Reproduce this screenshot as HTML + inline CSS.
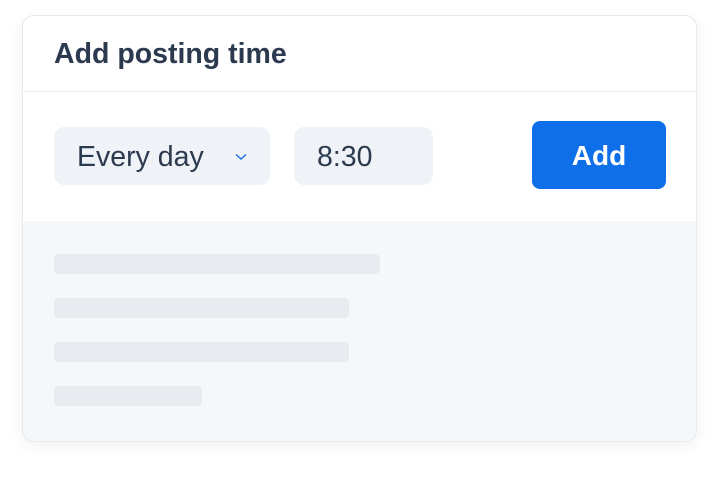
<!DOCTYPE html><html><head><style>
body{margin:0;width:720px;height:480px;background:#fff;font-family:"Liberation Sans",sans-serif;position:relative;overflow:hidden}
.card{position:absolute;left:22px;top:15px;width:673px;height:425px;border:1px solid #e6e8eb;border-radius:12px;overflow:hidden;box-shadow:0 4px 16px rgba(0,0,0,.06);background:#fff}
.h{position:absolute;left:31px;top:22px;font-size:28.5px;font-weight:bold;color:#2c3a4f}
.line{position:absolute;left:0;right:0;top:75px;height:1px;background:#e8edf3}
.sel{position:absolute;left:31px;top:111px;width:216px;height:58px;background:#eff2f7;border-radius:10px}
.sel span{position:absolute;left:23px;top:14px;font-size:28.5px;color:#2c3a4f}
.tm{position:absolute;left:271px;top:111px;width:139px;height:58px;background:#eff2f7;border-radius:10px}
.tm span{position:absolute;left:23px;top:14px;font-size:28.5px;color:#2c3a4f}
.btn{position:absolute;left:509px;top:105px;width:134px;height:68px;background:#0f6fe8;border-radius:8px;color:#fff;font-weight:bold;font-size:28px;text-align:center;line-height:70px}
.bot{position:absolute;left:0;right:0;top:205px;bottom:0;background:#f5f8fb}
.b{position:absolute;left:31px;height:20px;background:#e7eaee;border-radius:5px}
</style></head><body><div class="card">
<div class="h">Add posting time</div><div class="line"></div>
<div class="sel"><span>Every day</span><svg style="position:absolute;left:181px;top:26px" width="12" height="8" viewBox="0 0 12 8"><path d="M1 1.5L6 6 11 1.5" fill="none" stroke="#1d73e8" stroke-width="1.5"/></svg></div>
<div class="tm"><span>8:30</span></div>
<div class="btn">Add</div>
<div class="bot">
<div class="b" style="top:33px;width:326px"></div>
<div class="b" style="top:77px;width:295px"></div>
<div class="b" style="top:121px;width:295px"></div>
<div class="b" style="top:165px;width:148px"></div>
</div></div></body></html>
